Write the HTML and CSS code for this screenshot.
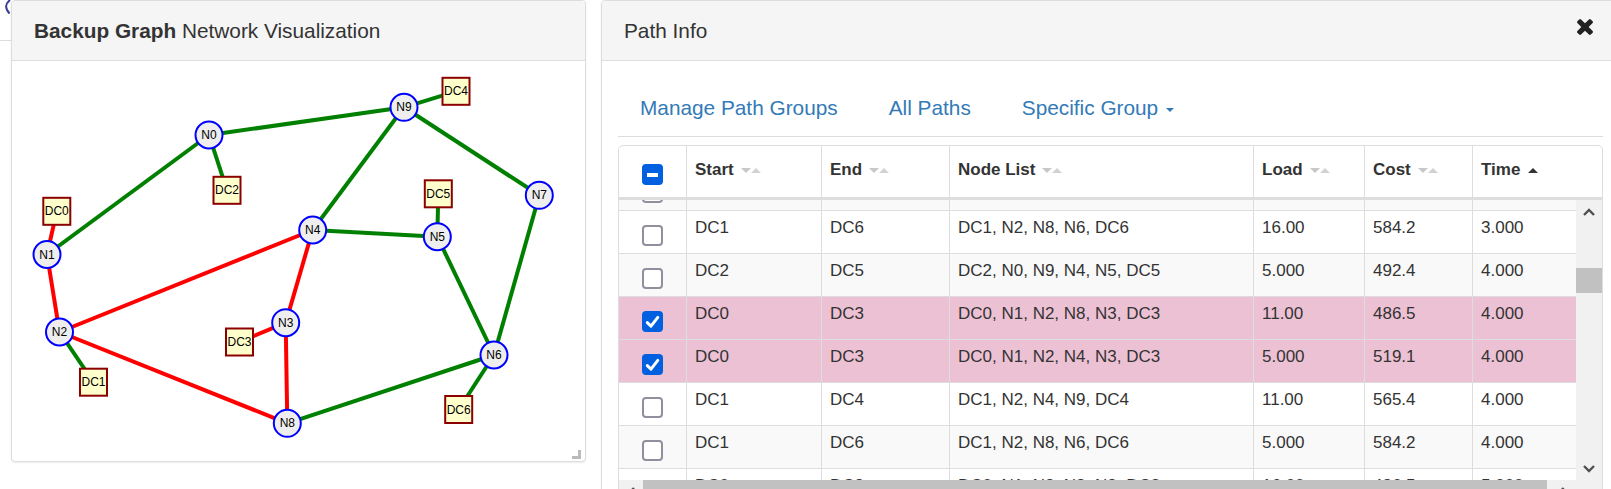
FILE: index.html
```html
<!DOCTYPE html>
<html lang="en">
<head>
<meta charset="utf-8">
<title>Backup Graph</title>
<link rel="stylesheet" href="styles.css">
</head>
<body>
<div class="desk">
  <div class="edge-strip">
    <svg width="11" height="40" viewBox="0 0 11 40"><path d="M10 0 Q 2.5 6 9.5 13.5" fill="none" stroke="#3b3f96" stroke-width="2"/></svg>
  </div>

  <section class="win win-graph">
    <header class="win-head">
      <h3 class="win-title"><b>Backup Graph</b> Network Visualization</h3>
    </header>
    <div class="graph-body">
      <svg class="graph" width="573" height="400" viewBox="12 61 573 400">
        <g class="edges">
          <line class="eg" x1="209" y1="135" x2="404" y2="107.3"/>
          <line class="eg" x1="209" y1="135" x2="47" y2="254.5"/>
          <line class="eg" x1="209" y1="135" x2="227" y2="190.3"/>
          <line class="eg" x1="404" y1="107.3" x2="456" y2="91.3"/>
          <line class="eg" x1="404" y1="107.3" x2="312.7" y2="230"/>
          <line class="eg" x1="404" y1="107.3" x2="539.3" y2="195.3"/>
          <line class="eg" x1="312.7" y1="230" x2="437.3" y2="236.7"/>
          <line class="eg" x1="437.3" y1="236.7" x2="438.3" y2="193.8"/>
          <line class="eg" x1="437.3" y1="236.7" x2="494" y2="355"/>
          <line class="eg" x1="539.3" y1="195.3" x2="494" y2="355"/>
          <line class="eg" x1="494" y1="355" x2="287.3" y2="423.3"/>
          <line class="eg" x1="494" y1="355" x2="458.7" y2="409.5"/>
          <line class="eg" x1="59.5" y1="332" x2="93.5" y2="382.2"/>
          <line class="er" x1="56.8" y1="211.3" x2="47" y2="254.5"/>
          <line class="er" x1="47" y1="254.5" x2="59.5" y2="332"/>
          <line class="er" x1="59.5" y1="332" x2="312.7" y2="230"/>
          <line class="er" x1="59.5" y1="332" x2="287.3" y2="423.3"/>
          <line class="er" x1="312.7" y1="230" x2="285.7" y2="322.7"/>
          <line class="er" x1="285.7" y1="322.7" x2="287.3" y2="423.3"/>
          <line class="er" x1="285.7" y1="322.7" x2="239.5" y2="342"/>
        </g>
        <g class="nodes">
          <circle cx="209" cy="135" r="13.5"/><text x="209" y="135">N0</text>
          <circle cx="47" cy="254.5" r="13.5"/><text x="47" y="254.5">N1</text>
          <circle cx="59.5" cy="332" r="13.5"/><text x="59.5" y="332">N2</text>
          <circle cx="285.7" cy="322.7" r="13.5"/><text x="285.7" y="322.7">N3</text>
          <circle cx="312.7" cy="230" r="13.5"/><text x="312.7" y="230">N4</text>
          <circle cx="437.3" cy="236.7" r="13.5"/><text x="437.3" y="236.7">N5</text>
          <circle cx="494" cy="355" r="13.5"/><text x="494" y="355">N6</text>
          <circle cx="539.3" cy="195.3" r="13.5"/><text x="539.3" y="195.3">N7</text>
          <circle cx="287.3" cy="423.3" r="13.5"/><text x="287.3" y="423.3">N8</text>
          <circle cx="404" cy="107.3" r="13.5"/><text x="404" y="107.3">N9</text>
        </g>
        <g class="dcs">
          <rect x="43.3" y="197.8" width="27" height="27"/><text x="56.8" y="211.3">DC0</text>
          <rect x="80" y="368.7" width="27" height="27"/><text x="93.5" y="382.2">DC1</text>
          <rect x="213.5" y="176.8" width="27" height="27"/><text x="227" y="190.3">DC2</text>
          <rect x="226" y="328.5" width="27" height="27"/><text x="239.5" y="342">DC3</text>
          <rect x="442.5" y="77.8" width="27" height="27"/><text x="456" y="91.3">DC4</text>
          <rect x="424.8" y="180.3" width="27" height="27"/><text x="438.3" y="193.8">DC5</text>
          <rect x="445.2" y="396" width="27" height="27"/><text x="458.7" y="409.5">DC6</text>
        </g>
      </svg>
      <span class="resize-handle"></span>
    </div>
  </section>

  <section class="win win-paths">
    <header class="win-head">
      <h3 class="win-title">Path Info</h3>
      <button class="close" aria-label="Close">
        <svg width="16" height="16" viewBox="110 366 1188 1188"><path d="M1298 1322q0 40-28 68l-136 136q-28 28-68 28t-68-28l-294-294-294 294q-28 28-68 28t-68-28l-136-136q-28-28-28-68t28-68l294-294-294-294q-28-28-28-68t28-68l136-136q28-28 68-28t68 28l294 294 294-294q28-28 68-28t68 28l136 136q28 28 28 68t-28 68l-294 294 294 294q28 28 28 68z"/></svg>
      </button>
    </header>
    <div class="paths-body">
      <ul class="tabs">
        <li><a href="#">Manage Path Groups</a></li>
        <li><a href="#">All Paths</a></li>
        <li><a href="#">Specific Group<span class="caret"></span></a></li>
      </ul>

      <div class="grid">
        <div class="row head">
          <span class="cell chk"><i class="cb mixed"></i></span>
          <span class="cell">Start<i class="sort"></i></span>
          <span class="cell">End<i class="sort"></i></span>
          <span class="cell">Node List<i class="sort"></i></span>
          <span class="cell">Load<i class="sort"></i></span>
          <span class="cell">Cost<i class="sort"></i></span>
          <span class="cell">Time<i class="sort-asc"></i></span>
        </div>
        <div class="grid-main">
          <div class="viewport">
            <div class="rows">
              <div class="row"><span class="cell chk"><i class="cb"></i></span><span class="cell"></span><span class="cell"></span><span class="cell"></span><span class="cell"></span><span class="cell"></span><span class="cell"></span></div>
              <div class="row"><span class="cell chk"><i class="cb"></i></span><span class="cell">DC1</span><span class="cell">DC6</span><span class="cell">DC1, N2, N8, N6, DC6</span><span class="cell">16.00</span><span class="cell">584.2</span><span class="cell">3.000</span></div>
              <div class="row"><span class="cell chk"><i class="cb"></i></span><span class="cell">DC2</span><span class="cell">DC5</span><span class="cell">DC2, N0, N9, N4, N5, DC5</span><span class="cell">5.000</span><span class="cell">492.4</span><span class="cell">4.000</span></div>
              <div class="row sel"><span class="cell chk"><i class="cb on"><svg width="21" height="21" viewBox="0 0 21 21"><polyline points="5.3,11.6 9,15.2 15.8,6.4"/></svg></i></span><span class="cell">DC0</span><span class="cell">DC3</span><span class="cell">DC0, N1, N2, N8, N3, DC3</span><span class="cell">11.00</span><span class="cell">486.5</span><span class="cell">4.000</span></div>
              <div class="row sel"><span class="cell chk"><i class="cb on"><svg width="21" height="21" viewBox="0 0 21 21"><polyline points="5.3,11.6 9,15.2 15.8,6.4"/></svg></i></span><span class="cell">DC0</span><span class="cell">DC3</span><span class="cell">DC0, N1, N2, N4, N3, DC3</span><span class="cell">5.000</span><span class="cell">519.1</span><span class="cell">4.000</span></div>
              <div class="row"><span class="cell chk"><i class="cb"></i></span><span class="cell">DC1</span><span class="cell">DC4</span><span class="cell">DC1, N2, N4, N9, DC4</span><span class="cell">11.00</span><span class="cell">565.4</span><span class="cell">4.000</span></div>
              <div class="row"><span class="cell chk"><i class="cb"></i></span><span class="cell">DC1</span><span class="cell">DC6</span><span class="cell">DC1, N2, N8, N6, DC6</span><span class="cell">5.000</span><span class="cell">584.2</span><span class="cell">4.000</span></div>
              <div class="row"><span class="cell chk"><i class="cb"></i></span><span class="cell">DC0</span><span class="cell">DC3</span><span class="cell">DC0, N1, N2, N8, N3, DC3</span><span class="cell">16.00</span><span class="cell">486.5</span><span class="cell">5.000</span></div>
            </div>
          </div>
          <div class="vbar">
            <span class="sbtn"><svg width="12" height="8" viewBox="0 0 12 8"><polyline points="1,7 6,2 11,7"/></svg></span>
            <span class="vtrack"><span class="vthumb"></span></span>
            <span class="sbtn"><svg width="12" height="8" viewBox="0 0 12 8"><polyline points="1,1 6,6 11,1"/></svg></span>
          </div>
        </div>
        <div class="grid-foot">
          <div class="hbar">
            <span class="sbtn"><svg width="8" height="12" viewBox="0 0 8 12"><polyline points="7,1 2,6 7,11"/></svg></span>
            <span class="htrack"><span class="hthumb"></span></span>
            <span class="sbtn"><svg width="8" height="12" viewBox="0 0 8 12"><polyline points="1,1 6,6 1,11"/></svg></span>
          </div>
          <span class="corner"></span>
        </div>
      </div>
    </div>
  </section>
</div>
</body>
</html>
```

FILE: styles.css
```css
html, body {
  margin: 0;
  height: 489px;
  overflow: hidden;
  background: #fff;
}
body {
  font-family: "Liberation Sans", Arial, sans-serif;
  color: #333;
}
.desk {
  display: flex;
  align-items: flex-start;
  width: max-content;
}
.edge-strip {
  flex: 0 0 11px;
  width: 11px;
  height: 40px;
  border-bottom: 1px solid #ddd;
  overflow: hidden;
}
.edge-strip svg { display: block; }

/* windows */
.win {
  flex: 0 0 auto;
  box-sizing: border-box;
  border: 1px solid #ddd;
  border-radius: 4px;
  background: #fff;
  box-shadow: 0 1px 2px rgba(0, 0, 0, 0.08);
  overflow: hidden;
}
.win-graph { width: 575px; height: 462px; margin-right: 15px; }
.win-paths { width: 1019px; height: 540px; }

.win-head {
  box-sizing: border-box;
  height: 60px;
  padding: 0 22px;
  background: #f5f5f5;
  border-bottom: 1px solid #ddd;
  display: flex;
  align-items: center;
  justify-content: space-between;
}
.win-title {
  margin: 0;
  font-size: 20.8px;
  line-height: 24px;
  font-weight: normal;
  color: #333;
}
.win-title b { font-weight: bold; }

.close {
  align-self: flex-start;
  margin: 18px 4px 0 0;
  padding: 0;
  border: 0;
  background: none;
  line-height: 0;
  cursor: pointer;
}
.close svg { display: block; fill: #222; }

/* graph */
.graph-body { position: relative; height: 400px; }
.graph { display: block; }
.graph line { stroke-width: 4; }
.graph .eg { stroke: #008000; }
.graph .er { stroke: #ff0000; }
.graph circle { fill: #eeeeee; stroke: #0000ff; stroke-width: 2; }
.graph rect { fill: #ffffcc; stroke: #8b0000; stroke-width: 2; }
.graph text {
  font-family: "Liberation Sans", Arial, sans-serif;
  font-size: 12px;
  fill: #000;
  text-anchor: middle;
  dominant-baseline: central;
}
.resize-handle {
  position: absolute;
  right: 4px;
  bottom: 2px;
  width: 6px;
  height: 6px;
  border-right: 3px solid #bbb;
  border-bottom: 3px solid #bbb;
}

/* path info */
.paths-body { padding: 0 16px; }
.tabs {
  list-style: none;
  margin: 0;
  box-sizing: border-box;
  height: 76px;
  padding: 0 0 16px 22px;
  border-bottom: 1px solid #ddd;
  display: flex;
  align-items: flex-end;
  gap: 51px;
}
.tabs a {
  display: block;
  color: #337ab7;
  text-decoration: none;
  font-size: 20.8px;
  line-height: 24px;
}
.caret {
  display: inline-block;
  margin-left: 8px;
  vertical-align: middle;
  border-top: 4.5px solid;
  border-left: 4.5px solid transparent;
  border-right: 4.5px solid transparent;
}

.grid {
  margin-top: 8px;
  border: 1px solid #ddd;
  border-radius: 5px 5px 0 0;
  overflow: hidden;
}
.row {
  display: grid;
  grid-template-columns: 68px 135px 128px 304px 111px 108px 1fr;
  font-size: 17px;
  line-height: 24px;
}
.cell {
  box-sizing: border-box;
  padding: 5px 8px 0;
  border-right: 1px solid #ddd;
  white-space: nowrap;
  overflow: hidden;
}
.cell:last-child { border-right: 0; }
.cell.chk { display: flex; justify-content: center; align-items: flex-start; padding: 14px 0 0; }

.row.head {
  box-sizing: border-box;
  height: 54px;
  border-bottom: 3px solid #ddd;
  font-weight: bold;
}
.row.head .cell { padding-top: 12px; padding-left: 8px; }
.row.head .cell.chk { padding: 18px 0 0; }

.sort {
  display: inline-flex;
  margin-left: 7px;
  vertical-align: 2px;
}
.sort::before, .sort::after {
  content: "";
  border-left: 5.5px solid transparent;
  border-right: 5.5px solid transparent;
}
.sort::before { border-top: 5px solid #c8c8c8; }
.sort::after { border-bottom: 5px solid #d2d2d2; }
.sort-asc {
  display: inline-block;
  margin-left: 8px;
  vertical-align: 2px;
  border-left: 5.5px solid transparent;
  border-right: 5.5px solid transparent;
  border-bottom: 5px solid #333;
}

.cb {
  display: block;
  box-sizing: border-box;
  width: 21px;
  height: 21px;
  border: 2px solid #8f8f9d;
  border-radius: 4px;
  background: #fff;
}
.cb.on, .cb.mixed {
  border: 0;
  background: #0060df;
  position: relative;
}
.cb svg { display: block; }
.cb polyline { fill: none; stroke: #fff; stroke-width: 3; stroke-linecap: round; stroke-linejoin: round; }
.cb.mixed::after {
  content: "";
  position: absolute;
  left: 5px;
  top: 8.5px;
  width: 11px;
  height: 4px;
  background: #fff;
}

.grid-main { display: flex; }
.viewport { flex: 1; height: 280px; overflow: hidden; }
.rows .row {
  box-sizing: border-box;
  height: 43px;
  border-top: 1px solid #ddd;
}
.rows .row:first-child { margin-top: -33px; }
.rows .row:nth-child(odd) { background: #f9f9f9; }
.rows .row.sel { background: #edc1d4; }

.vbar {
  flex: 0 0 26px;
  height: 280px;
  background: #f1f1f1;
  display: flex;
  flex-direction: column;
}
.sbtn {
  flex: 0 0 23px;
  display: flex;
  align-items: center;
  justify-content: center;
}
.sbtn svg { display: block; }
.sbtn polyline { fill: none; stroke: #505050; stroke-width: 2.4; }
.vtrack { flex: 1; }
.vthumb { display: block; margin-top: 45px; height: 25px; background: #c1c1c1; }

.grid-foot { display: flex; height: 26px; }
.hbar { flex: 1; display: flex; background: #f1f1f1; }
.htrack { flex: 1; }
.hthumb { display: block; margin-left: 1px; width: 904px; height: 26px; background: #c1c1c1; }
.corner { flex: 0 0 26px; background: #f1f1f1; }
```
